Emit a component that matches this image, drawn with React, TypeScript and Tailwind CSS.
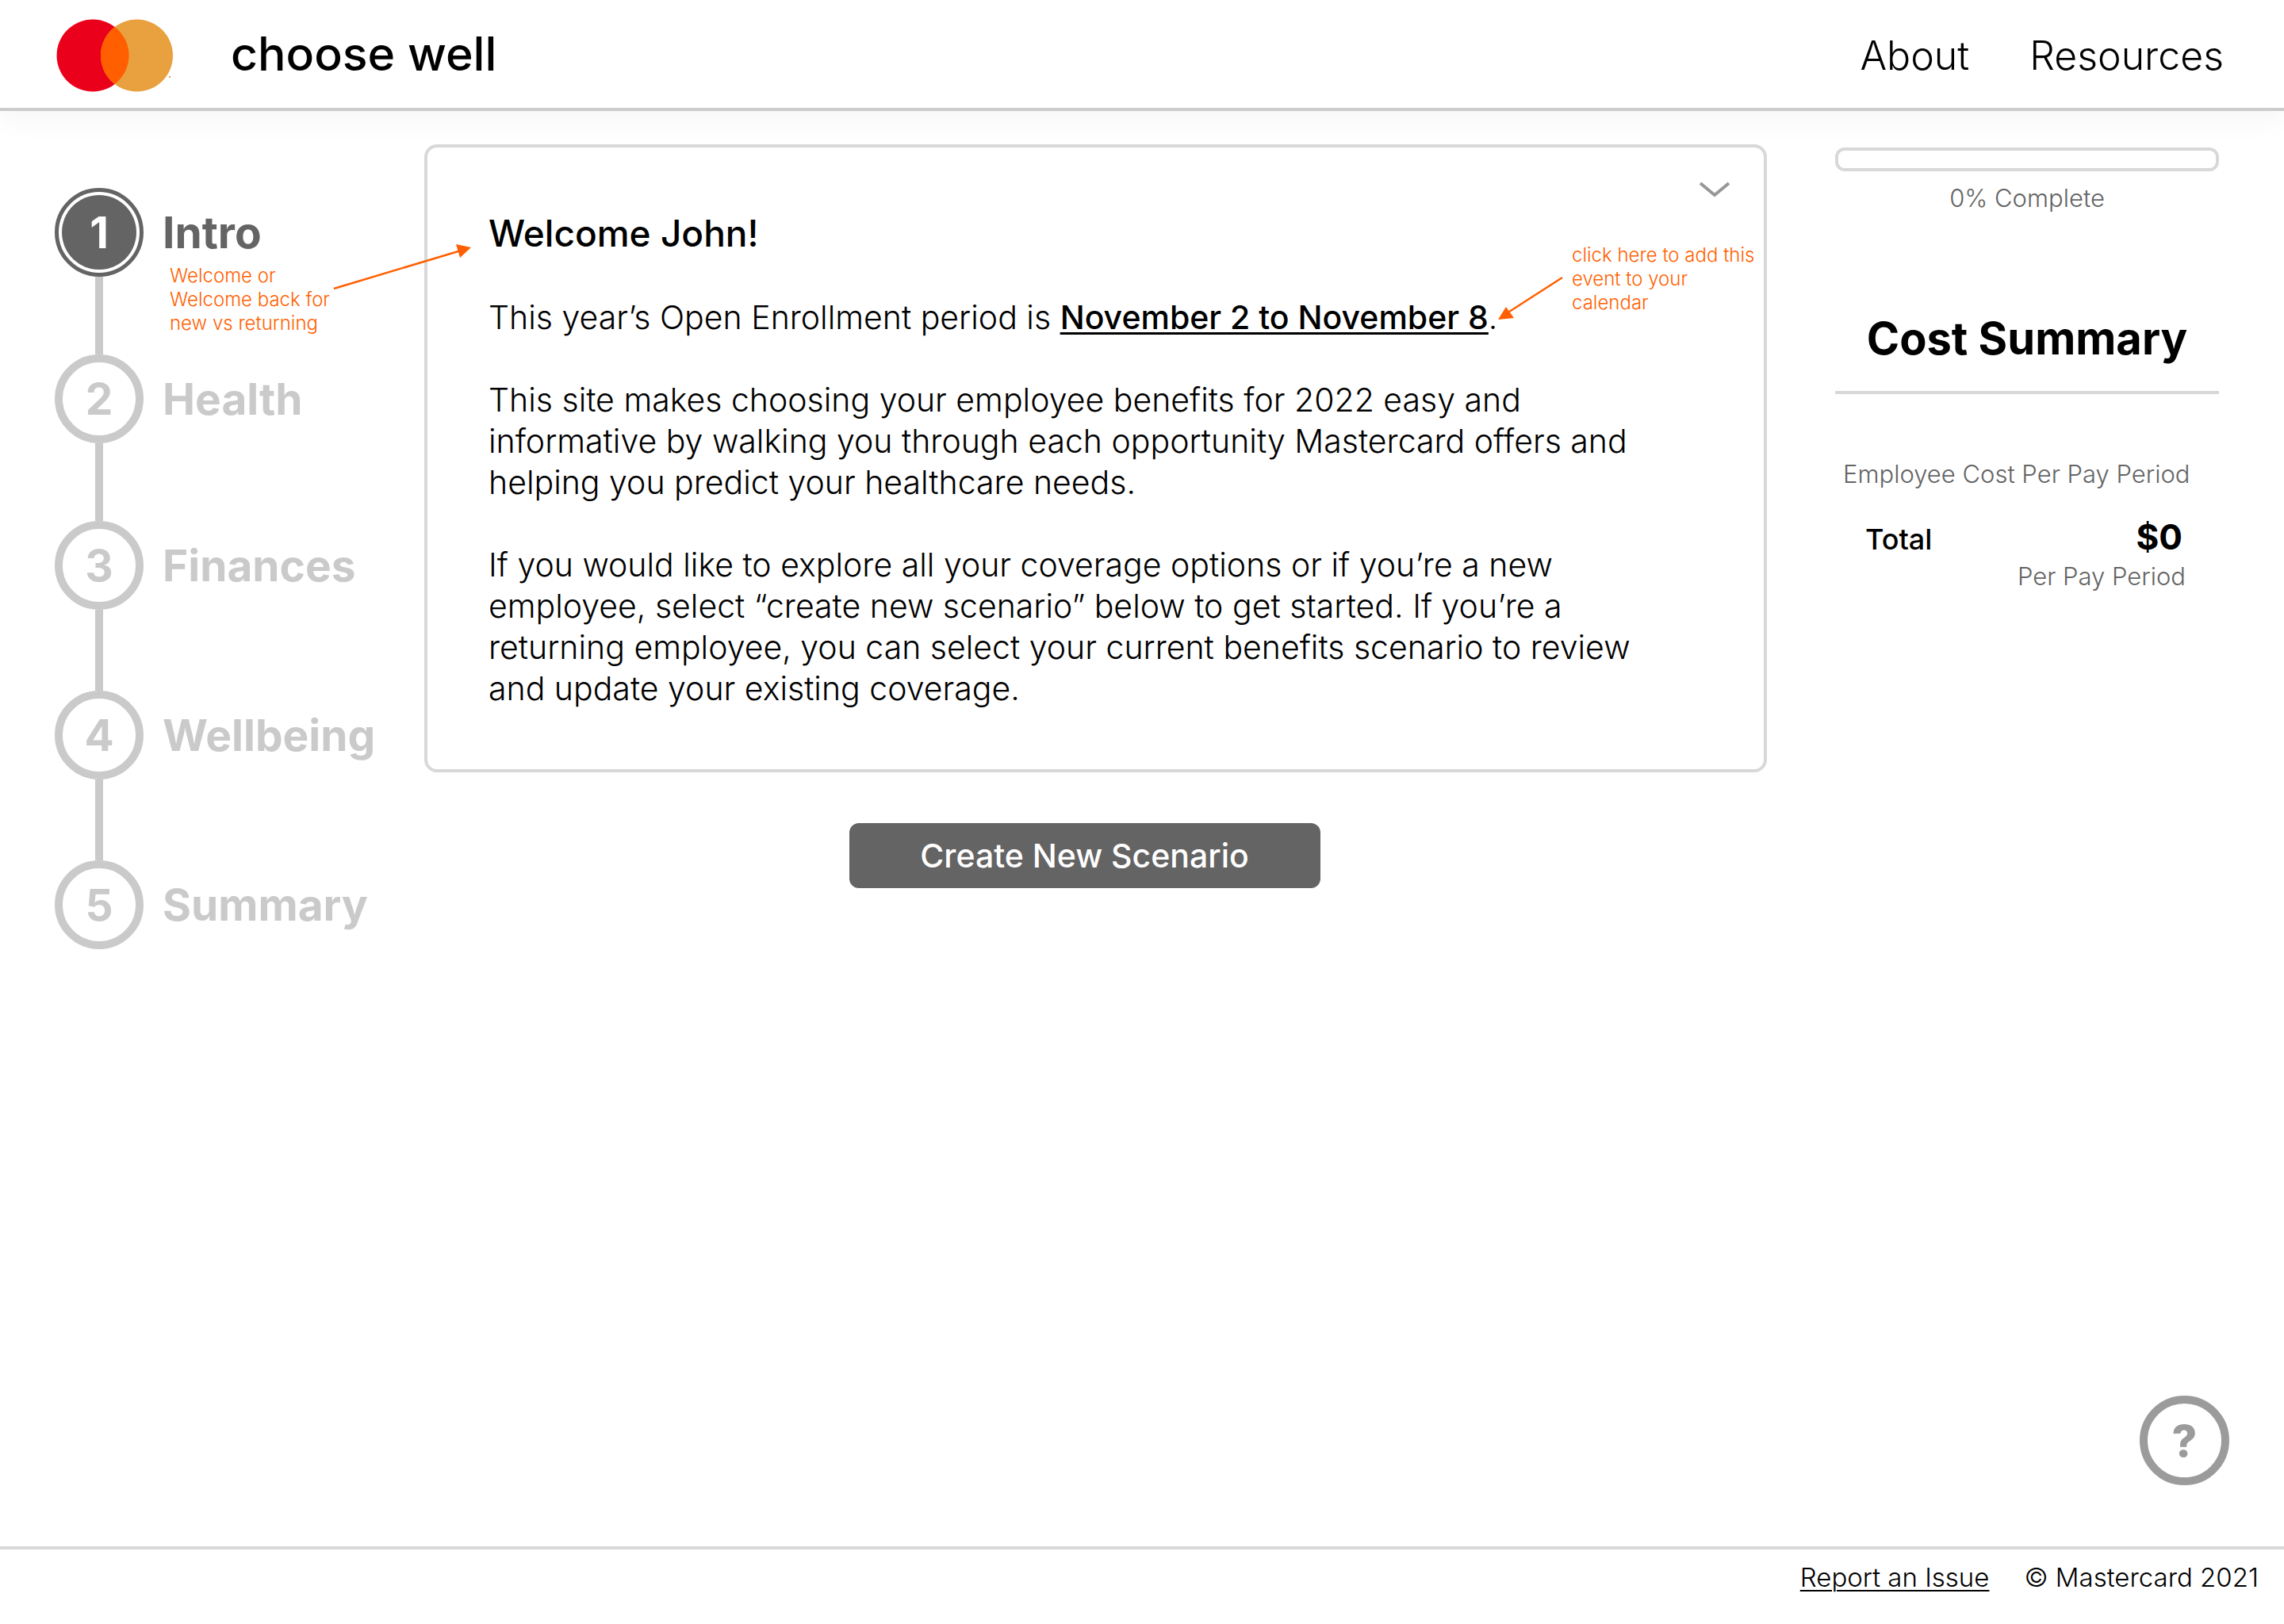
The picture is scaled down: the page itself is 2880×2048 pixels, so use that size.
import React from "react";

type Step = { id: number; label: string; active?: boolean; connector?: string };

const steps: Step[] = [
  { id: 1, label: "Intro", active: true, connector: "h-[98px]" },
  { id: 2, label: "Health", connector: "h-[98px]" },
  { id: 3, label: "Finances", connector: "h-[102px]" },
  { id: 4, label: "Wellbeing", connector: "h-[102px]" },
  { id: 5, label: "Summary" },
];

function Logo() {
  return (
    <svg className="h-[92px] w-[148px]" viewBox="0 0 148 92" role="img" aria-label="Mastercard">
      <circle cx="46" cy="46" r="45.5" fill="#eb001b" />
      <circle cx="101.5" cy="46" r="45.5" fill="#e9a03f" />
      <path d="M73.75 9.9a45.5 45.5 0 0 1 0 72.2a45.5 45.5 0 0 1 0-72.2z" fill="#ff5f00" />
      <rect x="142" y="72" width="2" height="2" fill="#f0965a" />
    </svg>
  );
}

function Header() {
  return (
    <header className="flex items-center justify-between border-b-4 border-[#cccccc] pt-6 pb-5 pr-[76px] pl-[71px] shadow-[0_12px_32px_rgba(0,0,0,0.04)]">
      <div className="flex items-center gap-[72px]">
        <Logo />
        <span className="-mt-1 text-[59px] leading-[72px] font-medium">choose well</span>
      </div>
      <nav className="flex gap-[76px] text-[50px] leading-[60px] font-light">
        <a href="#about">About</a>
        <a href="#resources">Resources</a>
      </nav>
    </header>
  );
}

function StepItem({ step }: { step: Step }) {
  return (
    <li className="relative">
      <a
        href={`#step-${step.id}`}
        aria-current={step.active ? "step" : undefined}
        className={
          step.active
            ? "flex items-center gap-6 text-[55px] leading-[64px] font-bold text-[#646464]"
            : "flex items-center gap-6 text-[55px] leading-[64px] font-bold text-[#cacaca]"
        }
      >
        {step.active ? (
          <span className="flex size-28 items-center justify-center rounded-full border-[5px] border-[#646464] p-1">
            <span className="flex size-full items-center justify-center rounded-full bg-[#646464] text-white">
              {step.id}
            </span>
          </span>
        ) : (
          <span className="flex size-28 items-center justify-center rounded-full border-[10px] border-[#cacaca]">
            {step.id}
          </span>
        )}
        <span>{step.label}</span>
      </a>
      {step.connector && <div className={`ml-[51px] w-[10px] bg-[#cacaca] ${step.connector}`} />}
      {step.active && (
        <>
          <p className="absolute top-[96px] left-[145px] text-[24px] leading-[30px] font-light whitespace-nowrap text-[#ff5f00]">
            Welcome or
            <br />
            Welcome back for
            <br />
            new vs returning
          </p>
          <svg
            className="absolute top-[66px] left-[350px] z-10 h-[64px] w-[180px]"
            viewBox="0 0 180 64"
            aria-hidden="true"
          >
            <path d="M2 61L162 13" stroke="#ff5f00" strokeWidth="2.5" fill="none" />
            <path d="M175 9L156 5L161 22z" fill="#ff5f00" />
          </svg>
        </>
      )}
    </li>
  );
}

function WelcomeCard() {
  return (
    <section className="relative rounded-2xl border-4 border-[#d8d8d8] pt-[82px] pb-[76px] pl-[77px] text-[41px] leading-[52px] font-light">
      <button type="button" aria-label="Collapse" className="absolute top-[41px] right-[41px]">
        <svg className="h-[26px] w-[42px]" viewBox="0 0 42 26" fill="none" stroke="#979797" strokeWidth="4">
          <path d="M3 4L21 19L39 4" />
        </svg>
      </button>
      <h1 className="mb-[54px] text-[46px] font-medium">Welcome John!</h1>
      <p className="mb-[52px]">
        This year’s Open Enrollment period is{" "}
        <a href="#calendar" className="font-medium underline decoration-[3px] underline-offset-[4px]">
          November 2 to November 8
        </a>
        .
      </p>
      <p className="mb-[52px]">
        This site makes choosing your employee benefits for 2022 easy and
        <br />
        informative by walking you through each opportunity Mastercard offers and
        <br />
        helping you predict your healthcare needs.
      </p>
      <p>
        If you would like to explore all your coverage options or if you’re a new
        <br />
        employee, select “create new scenario” below to get started. If you’re a
        <br />
        returning employee, you can select your current benefits scenario to review
        <br />
        and update your existing coverage.
      </p>
      <p className="absolute top-[121px] right-[2px] w-[240px] text-[24px] leading-[30px] font-light whitespace-nowrap text-[#ff5f00]">
        click here to add this
        <br />
        event to your
        <br />
        calendar
      </p>
      <svg
        className="absolute top-[160px] right-[252px] h-[64px] w-[90px]"
        viewBox="0 0 90 64"
        aria-hidden="true"
      >
        <path d="M88 4L18 49" stroke="#ff5f00" strokeWidth="2.5" fill="none" />
        <path d="M7 57L17 41L27 55z" fill="#ff5f00" />
      </svg>
    </section>
  );
}

function CostSummary() {
  return (
    <aside className="w-[484px] shrink-0 pt-1">
      <div
        role="progressbar"
        aria-label="Progress"
        aria-valuenow={0}
        aria-valuemin={0}
        aria-valuemax={100}
        className="h-[30px] rounded-xl border-4 border-[#d8d8d8]"
      />
      <p className="mt-4 text-center text-[31px] leading-[36px] font-light text-[#646464]">0% Complete</p>
      <h2 className="mt-[127px] border-b-4 border-[#d8d8d8] pb-[34px] text-center text-[56px] leading-[64px] font-bold">
        Cost Summary
      </h2>
      <p className="mt-[83px] pl-[10px] text-[31px] leading-[36px] font-light text-[#646464]">
        Employee Cost Per Pay Period
      </p>
      <div className="mt-[35px] flex items-baseline justify-between pr-[46px] pl-[38px]">
        <span className="text-[36px] leading-[52px] font-medium">Total</span>
        <span className="text-[44px] leading-[52px] font-bold">$0</span>
      </div>
      <p className="mt-[3px] pr-[42px] text-right text-[31px] leading-[36px] font-light text-[#646464]">
        Per Pay Period
      </p>
    </aside>
  );
}

export default function App() {
  return (
    <div className="flex min-h-screen flex-col bg-white font-[Inter,sans-serif] text-black">
      <Header />
      <main className="flex flex-1 flex-col">
        <div className="flex items-start pt-[42px] pr-[82px] pl-[69px]">
          <ol className="w-[466px] shrink-0 pt-[55px]">
            {steps.map((step) => (
              <StepItem key={step.id} step={step} />
            ))}
          </ol>
          <div className="mr-[86px] flex-1">
            <WelcomeCard />
            <div className="mt-16 flex justify-center pr-7">
              <button
                type="button"
                className="w-[594px] rounded-xl bg-[#646464] py-[15px] text-[41px] leading-[52px] font-medium text-white"
              >
                Create New Scenario
              </button>
            </div>
          </div>
          <CostSummary />
        </div>
        <div className="mt-auto flex justify-end pr-[69px] pb-[77px]">
          <button
            type="button"
            aria-label="Help"
            className="flex size-[113px] items-center justify-center rounded-full border-[10px] border-[#9b9b9b] text-[55px] leading-[64px] font-extrabold text-[#9b9b9b]"
          >
            ?
          </button>
        </div>
      </main>
      <footer className="flex justify-end gap-11 border-t-4 border-[#d8d8d8] pt-[15px] pr-8 pb-[39px] text-[33px] leading-[40px] font-light">
        <a href="#report" className="underline decoration-2 underline-offset-[4px]">
          Report an Issue
        </a>
        <span>© Mastercard 2021</span>
      </footer>
    </div>
  );
}
